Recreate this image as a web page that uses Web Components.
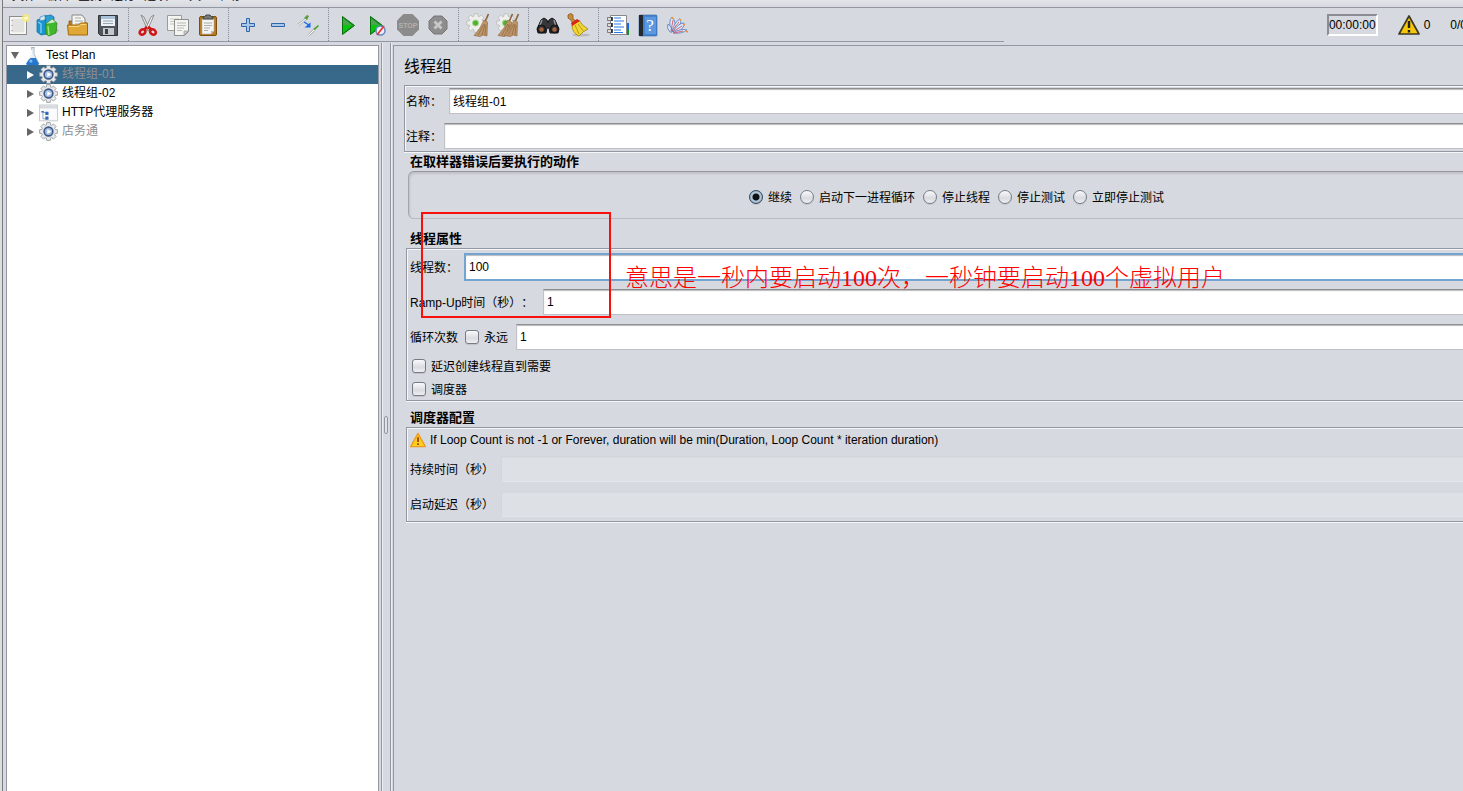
<!DOCTYPE html>
<html lang="zh-CN">
<head>
<meta charset="utf-8">
<title>Apache JMeter</title>
<style>
html,body{margin:0;height:100%;overflow:hidden}
body{background:#d6d9df;color:#000;font:12px/18px "Liberation Sans","Noto Sans CJK SC",sans-serif;text-spacing-trim:space-all}
</style>
</head>
<body>
<jm-app></jm-app>
<script>
const define=(name,html,setup)=>customElements.define(name,class extends HTMLElement{
  constructor(){super();this.attachShadow({mode:'open'});}
  connectedCallback(){
    if(this.shadowRoot.childNodes.length)return;
    const t=document.createElement('template');
    t.innerHTML=typeof html==='function'?html(this):html;
    this.shadowRoot.append(t.content.cloneNode(true));
    if(setup)setup(this);
  }
});

// Outline of a cog with eight teeth, centred on cx, cy
const cog=(cx,cy,outer,inner)=>{
  const pts=[];
  for(let i=0;i<8;i++)for(const [a,r] of [[-.3,inner],[-.2,outer],[.2,outer],[.3,inner]]){
    const t=i*Math.PI/4+a;
    pts.push((cx+r*Math.cos(t)).toFixed(2)+','+(cy+r*Math.sin(t)).toFixed(2));
  }
  return pts.join(' ');
};
const broom='<path d="M22.500 1l-4 9" stroke="#8a5f38" stroke-width="1.600"/><path d="M18 7l3.500 2-.500 14-4-1-3 1.500-6-1q6-6 10-15.500z" fill="#bd9568" stroke="#94704a" stroke-width=".7"/><path d="M18 11l-6 11M19 11l-3 11M20 12l-1 10" stroke="#8d683f" stroke-width=".7"/>';
const paleGear=`<polygon points="${cog(10,10,9.5,7)}" fill="#eeefec" stroke="#b8bbb6" stroke-width=".8"/><circle cx="9.500" cy="10" r="3" fill="#4fb030" stroke="#a4d58e"/>`;
const icons={
new:'<rect x="3.500" y="3.500" width="17" height="18" fill="#eeeeec" stroke="#8b8d88"/><rect x="5" y="5" width="14" height="15" fill="#e2e3e0" stroke="#fff"/><path d="M6 7v1M6 12v1M6 17v1" stroke="#888"/><circle cx="20" cy="5" r="4" fill="#f8ee70" opacity=".75"/><circle cx="20" cy="5" r="1.800" fill="#fffcd0"/>',
templates:'<path d="M13 21l10-3-5-6z" fill="#888" opacity=".5"/><path d="M1 7l7-2 3 2v14l-6 1-4-3z" fill="#1b93cf" stroke="#0868a0" stroke-width=".7"/><path d="M2 9l3 2v9" stroke="#75cdf0" fill="none" stroke-width="1.500"/><path d="M4 4l6-2 2 4-8 2z" fill="#d8e6ee" stroke="#3c8cb8" stroke-width=".7"/><path d="M9 3l6-1 3 2v14l-7 2z" fill="#2a9fd2" stroke="#0868a0" stroke-width=".7"/><path d="M10 11l7-3 4 2-1 10-7 3-3-2z" fill="#43b72c" stroke="#238317" stroke-width=".7"/><path d="M12 13l1 9" stroke="#9be77c" stroke-width="1.400"/><path d="M10 11l6-5 4 3" fill="#d5eccd" stroke="#4aa33a" stroke-width=".8"/>',
open:'<path d="M3 8h8l2 2h8v10H3z" fill="#b77b1b" stroke="#8f5902" stroke-width=".8"/><path d="M6 2h10l3 4v9H6z" fill="#f4f4f2" stroke="#888"/><path d="M9 5h6M9 8h8M9 11h7" stroke="#aaa"/><path d="M1.500 12h11l2-2h7v12h-19z" fill="#e0a836" stroke="#a36a09"/><path d="M3 13.500h10l2-2h5" fill="none" stroke="#f8d782"/>',
save:'<path d="M2.500 2.500h19v20h-17l-2-2z" fill="#50565b" stroke="#30353a"/><path d="M5 3h14v10H5z" fill="#eaf1f7"/><path d="M5 3h14v3H5z" fill="#a9c2d8"/><path d="M7 8h10M7 10.500h10" stroke="#9aa6b0"/><path d="M7 15h11v7H7z" fill="#c5c8ca"/><path d="M9 16h3v5H9z" fill="#3e4246"/>',
cut:'<path d="M5 2l3 2 6 13-2 1z" fill="#e6e7e4" stroke="#777" stroke-width=".8"/><path d="M18 2l-3 2-6 13 2 1z" fill="#f6f6f4" stroke="#777" stroke-width=".8"/><path d="M11 14l-3 3M12 14l4 3" stroke="#cf1717" stroke-width="3"/><ellipse cx="6.500" cy="19" rx="3" ry="2.500" fill="#d6d9df" stroke="#cf1717" stroke-width="2.600" transform="rotate(-35 6.500 19)"/><ellipse cx="17" cy="19" rx="3" ry="2.500" fill="#d6d9df" stroke="#cf1717" stroke-width="2.600" transform="rotate(35 17 19)"/>',
copy:'<path d="M1.500 2.500h14v15h-14z" fill="#f4f4f2" stroke="#999c98"/><path d="M4 6h9M4 8.500h9M4 11h9" stroke="#c5c7c3"/><path d="M8.500 6.500h14v12l-4 4h-10z" fill="#f4f4f2" stroke="#8b8e89"/><path d="M11 10h9M11 12.500h9M11 15h7M11 17.500h5" stroke="#b8bab5"/><path d="M18 22v-4h4z" fill="#ccc" stroke="#999" stroke-width=".7"/>',
paste:'<rect x="3.500" y="3.500" width="17" height="19" rx="1.500" fill="#b87b20" stroke="#7d4e08"/><path d="M6 6h12v12l-3 3H6z" fill="#f4f4f2" stroke="#aaa" stroke-width=".6"/><path d="M8 10h8M8 12.500h8M8 15h6M8 17.500h4" stroke="#aaa"/><path d="M15 21v-3h3z" fill="#bbb"/><path d="M7 6V4q2 0 3-2h4q1 2 3 2v2z" fill="#777b75" stroke="#454742"/>',
plus:'<path d="M10.500 5.500h3v5h5v3h-5v5h-3v-5h-5v-3h5z" fill="#a8c7ed" stroke="#3065a8"/>',
minus:'<path d="M5.500 10.500h13v3h-13z" fill="#a8c7ed" stroke="#3065a8"/>',
toggle:'<path d="M2 12l8-6" stroke="#b5b8b5" stroke-width="2.800"/><path d="M2 12l8-6" stroke="#f8f8f5"/><path d="M8 5l3-3 2 1-2 4z" fill="#5c9b43"/><path d="M8 9l5 3" stroke="#176bea" stroke-width="1.400"/><path d="M14.500 9.500v5h-6z" fill="#176bea"/><path d="M13 22l5-5" stroke="#b5b8b4" stroke-width="2.500"/><path d="M13 22l5-5" stroke="#fff"/><path d="M17 16l5-4 1 1-4 4z" fill="#529e39"/>',
run:'<path d="M6.500 3.500v18l12-9z" fill="#12901a" stroke="#0b6f10"/><path d="M7 5v7l10 1z" fill="#4ca350"/><path d="M7 12v8l10-8z" fill="#08c510"/>',
runNo:'<path d="M4.500 3.500v18l12-9z" fill="#12901a" stroke="#0b6f10"/><path d="M5 5v7l10 1z" fill="#4ca350"/><path d="M5 12v8l10-8z" fill="#08c510"/><circle cx="14.500" cy="17.500" r="4.500" fill="#e7effa" stroke="#6388bf" stroke-width="1.500"/><path d="M18 13l-7 9" stroke="#ec3434" stroke-width="1.800"/>',
stop:'<path d="M7.500 1h9L23 7.500v9L16.500 23h-9L1 16.500v-9z" fill="#8b8b8b"/><text x="12" y="15" text-anchor="middle" font-family="Liberation Sans,sans-serif" font-weight="700" font-size="7" fill="#b0b0b0">STOP</text>',
shutdown:'<path d="M8 3h8l5 5v8l-5 5H8l-5-5V8z" fill="#8d8d8d" stroke="#777"/><path d="M8.500 8.500l7 7M15.500 8.500l-7 7" stroke="#c8c8c8" stroke-width="2.800"/>',
clear:paleGear+broom,
clearAll:paleGear+'<g transform="translate(-6 0)">'+broom+'</g>'+broom,
find:'<path d="M5 7l3-2 3 2 1 3 1-3 3-2 3 2 4 9-1 4H14l-1-5h-2l-1 5H2l-1-4z" fill="#35373b" stroke="#151719"/><path d="M6 7l-3 8M18 7l2 7" stroke="#92969c" stroke-width="1.500"/><circle cx="5.500" cy="16" r="4" fill="#292b2e" stroke="#111"/><circle cx="18.500" cy="16" r="4" fill="#292b2e" stroke="#111"/><circle cx="5.500" cy="16.500" r="2.200" fill="#a6633b"/><circle cx="18.500" cy="16.500" r="2.200" fill="#a6633b"/>',
broom:'<ellipse cx="15" cy="22" rx="9" ry="1.500" fill="#999" opacity=".5"/><path d="M2 2q3-3 5 0v4l3 2-3 3-2-4-3-2z" fill="#c98b3d" stroke="#89531b" stroke-width=".8"/><path d="M6 12l7-5q3 6 9 9-5 2-9 7Q6 20 6 12z" fill="#f0d634" stroke="#aa8508" stroke-width=".8"/><path d="M5 10l6-4 3 2-8 5z" fill="#d62618"/><path d="M9 12l4 9M12 11l6 8" stroke="#b89b18"/>',
functions:'<path d="M17 10h6v6h-6z" fill="#116af0"/><path d="M17 16h6v6h-6z" fill="#198d30"/><path d="M4.500 2.500h16v19h-16z" fill="#fff" stroke="#888"/><path d="M1.500 4.500h4v3h-4zM1.500 10.500h4v3h-4zM1.500 16.500h4v3h-4z" fill="#ddd" stroke="#666" stroke-width=".8"/><path d="M6 4v4M6 10v4M6 16v4" stroke="#111" stroke-width="1.500"/><path d="M8 5h7M8 8h10M8 11h7M8 14h10M8 17h7M8 19.500h9" stroke="#267be6" stroke-width="1.200"/>',
help:'<rect x="3" y="2" width="18" height="21" rx="1" fill="#4384d1" stroke="#3267a4" stroke-width=".6"/><path d="M3 2h4v21H3z" fill="#24282f"/><path d="M9 4h11v17H9z" fill="#5b98df"/><text x="14" y="18" text-anchor="middle" font-family="Liberation Serif,serif" font-size="17" fill="#fff">?</text>',
feather:'<g fill="#dce6f5" stroke="#6085c4" stroke-width=".9"><path d="M5 19Q2 8 6 4q5 5 2 14z"/><path d="M6 18Q9 8 14 6q3 5-5 12z"/><path d="M7 19Q12 10 18 10q1 6-9 10z"/><path d="M7 20q8-5 14-3-5 4-13 3z"/><path d="M4 19q-4-4-2-8 4 2 4 8z"/></g><path d="M5 18L7 7M6 18l7-9M7 19l9-6M8 20l9-2" stroke="#d25868" stroke-width=".9"/><path d="M13 6l2 1M17 11l2 1M20 18l2 1M6 4l1 2" stroke="#e99639" stroke-width="1.500"/>',
warn:'<path d="M12 3L22 21H2z" fill="#f5c60b" stroke="#3d3823" stroke-width="1.700" stroke-linejoin="round"/><path d="M12 8v7M12 17v2.500" stroke="#222" stroke-width="2.400"/>',
warnSmall:'<path d="M12 2L23 22H1z" fill="#ffd019" stroke="#ee9a22" stroke-width="2" stroke-linejoin="round"/><path d="M12 8v7M12 17v2.500" stroke="#a64616" stroke-width="2.800"/>',
flask:'<path d="M10 2h5M11 2v8L5 22q0 2 2 2h11q2 0 2-2L14 10V2z" fill="#e8eef4" stroke="#a5b1bc"/><path d="M9 15h7l4 7q0 2-2 2H6q-2 0-2-2z" fill="#2677d0"/><path d="M11 5v5l-3 6" stroke="#fff" stroke-width="1.500" fill="none"/><circle cx="10" cy="19" r="2" fill="#80bcf2"/>',
gear:`<polygon points="${cog(12,12,11.5,8.8)}" fill="#e6e7e8" stroke="#8f9498" stroke-width="1"/><circle cx="12" cy="12" r="5.500" fill="#a5bfe2" stroke="#3f5a88" stroke-width="2"/><path d="M10.500 9v6l5-3z" fill="#fff"/>`,
proxy:'<path d="M.5 2.500h23v20H.5z" fill="#fbfbfb" stroke="#b8babe"/><path d="M1 3h22v4H1z" fill="#d7dade"/><path d="M5 10v10h4M5 12h4" stroke="#7794c2" fill="none"/><path d="M3 10h3v2H3zM8 11h4v4H8zM8 17h4v4H8z" fill="#3269b8"/>'
};
define('jm-icon',el=>`<style>:host{display:block;flex:none;width:var(--icon-size,24px);height:var(--icon-size,24px)}svg{display:block;width:100%;height:100%}</style><svg viewBox="0 0 24 24" fill="none" aria-hidden="true">${icons[el.getAttribute('name')]}</svg>`);

define('jm-menu',`<style>
:host{display:block;height:7px;overflow:hidden;background:linear-gradient(#e2e4e9,#d6d9df);border-bottom:1px solid #9297a1}
nav{display:flex;gap:9px;padding-left:9px;margin-top:-12px}
button{all:unset;font-size:12px;line-height:17px}
button:last-child{margin-left:6px}
</style><nav><button>文件</button><button>编辑</button><button>查找</button><button>运行</button><button>选项</button><button>工具</button><button>帮助</button></nav>`);

const groups=[['new:新建','templates:模板','open:打开','save:保存'],['cut:剪切','copy:复制','paste:粘贴'],['plus:全部展开','minus:全部折叠','toggle:切换'],['run:启动','runNo:不停顿开始','stop:停止','shutdown:关闭'],['clear:清除','clearAll:清除全部'],['find:搜索','broom:重置搜索'],['functions:函数助手','help:帮助','feather:JMeter']];
define('jm-toolbar',()=>`<style>
:host{display:flex;height:37px;overflow:hidden}
.tools{display:flex;box-sizing:border-box;height:34px;flex:0 1 1001px;border-bottom:1px solid #9297a1}
.set{display:flex}
.set+.set{margin-left:5px;padding-left:4px;border-left:1px dotted #868b95}
button{all:unset;width:30px;display:grid;place-items:center}
.status{display:flex;align-items:center;height:34px;margin:0 -4px 0 auto}
time{border:2px solid;border-color:#8b8d92 #fff #fff #8b8d92;line-height:18px}
jm-icon{flex:none}
.status jm-icon{margin:0 3px 0 19px}
.count{margin-left:20px}
</style><div class="tools" role="toolbar">${groups.map(g=>`<div class="set">${g.map(i=>{const [n,l]=i.split(':');return `<button aria-label="${l}"><jm-icon name="${n}"></jm-icon></button>`}).join('')}</div>`).join('')}</div>
<div class="status"><time>00:00:00</time><jm-icon name="warn"></jm-icon><span>0</span><span class="count">0/0</span></div>`);

define('jm-tree-item',el=>`<style>
:host{display:flex;align-items:center;height:19px;line-height:17px;padding-left:20px;white-space:nowrap;--icon-size:19px;--arrow:#666}
:host([root]){padding-left:4px}
:host([disabled]){color:#8e8f91}
:host([selected]){background:#39698a;--arrow:#fff}
.arrow{width:0;height:0;border:solid transparent;border-width:4px 0 4px 7px;border-left-color:var(--arrow);margin-right:5px}
:host([root]) .arrow{border-width:7px 4px 0;border-color:var(--arrow) transparent transparent;margin-right:4px}
jm-icon{margin-right:4px}
</style><span class="arrow"></span><jm-icon name="${el.getAttribute('icon')}"></jm-icon><slot></slot>`);
define('jm-tree',`<style>
:host{display:block;background:#fff;border:1px solid #9297a1;border-bottom:0}
</style><slot></slot>`,el=>el.setAttribute('role','tree'));

define('jm-splitter',`<style>
:host{display:flex;box-sizing:border-box;align-items:center;justify-content:center;margin-top:-2px;padding-top:15px;border:solid #9297a1;border-width:0 1px;box-shadow:inset 1px 0 #eceef2,1px 0 #eceef2}
i{box-sizing:border-box;width:4px;height:18px;border:1px solid #9297a1;border-radius:2px;background:#e0e2e7}
</style><i></i>`);

define('jm-field',el=>`<style>
:host{display:block}
label{display:flex;align-items:center;height:26px}
span{flex:none;width:var(--label-width);white-space:nowrap;line-height:16px;padding-top:2px}
input{all:unset;flex:1;min-width:0;box-sizing:border-box;height:26px;padding:0 3px 1px;background:#fff;border:1px solid #bfc1c6;border-top-color:#8d8e92;box-shadow:inset 0 1px 1px #bbb}
:host([focused]) input{outline:2px solid #73a4d1;outline-offset:-1px;border-color:#888d95;margin-left:1px}
input:disabled{background:#dde0e5;border-color:#d2d5da #dfe2e6 #e1e4e8 #d2d5da;box-shadow:inset 0 1px #d8dadf}
</style><label><span>${el.getAttribute('label')}</span><input type="text" value="${el.getAttribute('value')||''}" ${el.hasAttribute('disabled')?'disabled':''}></label>`);

const choiceCss=`label{display:flex;align-items:center;gap:5px;white-space:nowrap}
label span{line-height:16px;padding-top:2px}
input{appearance:none;flex:none;box-sizing:border-box;margin:0;width:14px;height:14px;border:1px solid #777b84;background:linear-gradient(#fafafb,#d9dbe0 60%,#eff0f3);box-shadow:0 1px #c1c4ca}`;
define('jm-checkbox',el=>`<style>:host{display:block}${choiceCss}input{border-radius:3px}</style><label><input type="checkbox"><span>${el.getAttribute('label')}</span></label>`);
define('jm-radios',el=>`<style>:host{display:flex;justify-content:center;gap:8px}${choiceCss}
input{border-radius:50%}
input:checked{border-color:#33475b;background:radial-gradient(circle,#111 0 3px,#b0c7da 4px 5px,#7794ad 7px)}
</style>${el.getAttribute('options').split('|').map((o,i)=>`<label><input type="radio" name="action" ${i?'':'checked'}><span>${o}</span></label>`).join('')}`);

define('jm-group',el=>`<style>
:host{display:block}
h2{margin:0 0 0 4px;font-size:13px;line-height:18px;font-weight:700}
.box{border:1px solid #9297a1;box-shadow:inset 1px 1px #f5f6f8,0 1px #f5f6f8;padding:var(--box-padding,5px 3px 1px)}
:host([rounded]) .box{margin-left:2px;box-sizing:border-box;height:48px;padding:0;display:grid;align-items:center;border-color:#95979d #b9bbc0 #b9bbc0 #a2a5ab;border-radius:6px;padding-top:4px;box-shadow:inset 1px 2px 2px #bfc2c8}
</style>${el.hasAttribute('label')?`<h2>${el.getAttribute('label')}</h2>`:''}<div class="box"><slot></slot></div>`);

define('jm-note',`<style>
:host{position:absolute;left:27px;top:166px;display:flex;width:830px;pointer-events:none;color:#f00}
.frame{box-sizing:border-box;flex:none;width:190px;height:106px;border:2px solid #f8100c}
p{margin:48px 0 0 14px;white-space:nowrap;font:300 24px/36px "Liberation Serif","Noto Sans CJK SC",serif}
</style><div class="frame"></div><p><slot></slot></p>`);

define('jm-thread-group',`<style>
:host{display:block;position:relative;overflow:hidden;border:solid #9297a1;border-width:1px 0 0 1px}
form{margin:0 -42px 0 12px;padding-top:9px}
h1{margin:0 0 6px -2px;font-size:16px;line-height:24px;font-weight:400}
.names{margin-left:-2px;--box-padding:2px 2px 2px 1px;padding-bottom:1px}
.name{--label-width:43px}
.comment{--label-width:38px;margin-top:9px}
.threads{--label-width:54px}.ramp{--label-width:133px}
.ramp,.loop{margin-top:9px}
.loop{display:flex;align-items:center}
.loop>span{line-height:16px;padding-top:2px}
.loop jm-checkbox{margin:0 7px}
.loop jm-field{flex:1;--label-width:1px}
.props{margin-top:11px}.schedule{margin-top:8px;--box-padding:3px 3px 4px}
.opt{box-sizing:border-box;height:20px;margin:3px 0 0 2px;padding-top:1px}
.opt.first{margin-top:6px}
.warning{display:flex;align-items:center;gap:4px;margin-bottom:7px;--icon-size:16px;white-space:nowrap}
.dur{--label-width:91px}.dur+.dur{margin-top:9px}
</style>
<form><h1>线程组</h1>
<jm-group class="names"><jm-field class="name" label="名称：" value="线程组-01"></jm-field><jm-field class="comment" label="注释："></jm-field></jm-group>
<jm-group rounded label="在取样器错误后要执行的动作"><jm-radios options="继续|启动下一进程循环|停止线程|停止测试|立即停止测试"></jm-radios></jm-group>
<jm-group class="props" label="线程属性"><jm-field class="threads" focused label="线程数：" value="100"></jm-field><jm-field class="ramp" label="Ramp-Up时间（秒）：" value="1"></jm-field>
<div class="loop"><span>循环次数</span><jm-checkbox label="永远"></jm-checkbox><jm-field label="" value="1"></jm-field></div>
<jm-checkbox class="opt first" label="延迟创建线程直到需要"></jm-checkbox><jm-checkbox class="opt" label="调度器"></jm-checkbox></jm-group>
<jm-group class="schedule" label="调度器配置"><div class="warning"><jm-icon name="warnSmall"></jm-icon><span>If Loop Count is not -1 or Forever, duration will be min(Duration, Loop Count * iteration duration)</span></div>
<jm-field class="dur" disabled label="持续时间（秒）"></jm-field><jm-field class="dur" disabled label="启动延迟（秒）"></jm-field></jm-group>
</form><jm-note>意思是一秒内要启动100次，一秒钟要启动100个虚拟用户</jm-note>`);

define('jm-app',`<style>
:host{display:grid;grid-template-columns:2px minmax(0,1fr);height:100vh;overflow:hidden}
.edge{background:#dcdddc}
.window{display:flex;flex-direction:column;min-width:0;border-left:1px solid #777b80}
main{flex:1;min-height:0;display:grid;grid-template-columns:373px 10px minmax(0,1fr);padding-left:3px}
jm-splitter{margin-left:2px;width:10px}
jm-thread-group{margin-left:4px}
</style><div class="edge"></div><div class="window"><jm-menu></jm-menu><jm-toolbar></jm-toolbar><main>
<jm-tree><jm-tree-item root icon="flask">Test Plan</jm-tree-item><jm-tree-item icon="gear" selected disabled>线程组-01</jm-tree-item><jm-tree-item icon="gear">线程组-02</jm-tree-item><jm-tree-item icon="proxy">HTTP代理服务器</jm-tree-item><jm-tree-item icon="gear" disabled>店务通</jm-tree-item></jm-tree>
<jm-splitter></jm-splitter><jm-thread-group></jm-thread-group></main></div>`);
</script>
</body>
</html>
